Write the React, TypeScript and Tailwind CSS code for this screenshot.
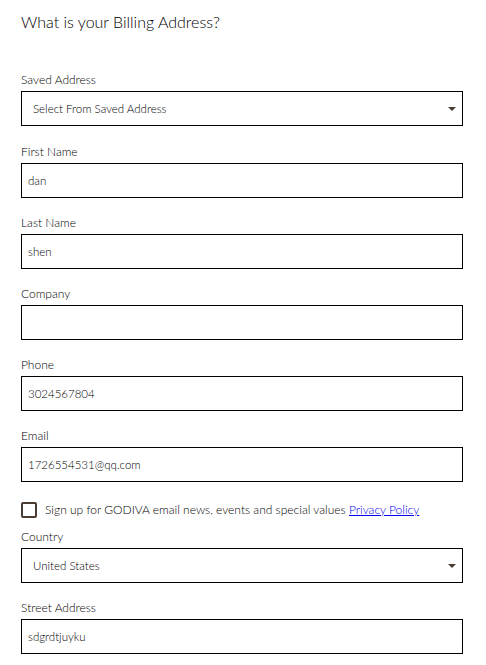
const FIELDS_TOP = [
  { label: 'First Name', value: 'dan' },
  { label: 'Last Name', value: 'shen' },
  { label: 'Company', value: '' },
  { label: 'Phone', value: '3024567804' },
  { label: 'Email', value: '1726554531@qq.com' },
];

function Caret() {
  return (
    <svg width="8" height="4" viewBox="0 0 8 4" className="absolute right-[6px] top-[15px]">
      <path d="M0 0h8L4 4z" fill="#4a3b33" />
    </svg>
  );
}

function SelectBox({ value }: { value: string }) {
  return (
    <div className="relative h-[35px] border border-black bg-white flex items-center pl-[11px] text-[11.5px] text-black">
      {value}
      <Caret />
    </div>
  );
}

function Field({ label, value }: { label: string; value: string }) {
  return (
    <div className="mb-[16px]">
      <label className="block h-[17px] text-[12px] leading-[17px] text-black mb-[3px]">{label}</label>
      <input
        readOnly
        value={value}
        className="block w-full h-[35px] border border-black bg-white px-[6px] text-[11.5px] text-black font-light outline-none"
      />
    </div>
  );
}

export default function App() {
  return (
    <main
      className="min-h-screen bg-white text-black font-light"
      style={{ fontFamily: 'Lato, "Liberation Sans", sans-serif' }}
    >
      <div className="w-[442px] ml-[21px] pt-[11px]">
        <h1 className="text-[16px] leading-[22px] font-light mb-[38px]">What is your Billing Address?</h1>

        <div className="mb-[17px]">
          <label className="block h-[17px] text-[12px] leading-[17px] mb-[3px]">Saved Address</label>
          <SelectBox value="Select From Saved Address" />
        </div>

        {FIELDS_TOP.map((f) => (
          <Field key={f.label} label={f.label} value={f.value} />
        ))}

        <div className="flex items-center gap-[8px] mt-[19px] mb-[9px] h-[18px] text-[12px]">
          <span className="w-[16px] h-[16px] border-2 border-[#4a3b33] rounded-[2px] shrink-0" />
          <span>
            Sign up for GODIVA email news, events and special values{' '}
            <a href="#" className="text-[#0000ee] underline">Privacy Policy</a>
          </span>
        </div>

        <div className="mb-[16px]">
          <label className="block h-[17px] text-[12px] leading-[17px] mb-[3px]">Country</label>
          <SelectBox value="United States" />
        </div>

        <Field label="Street Address" value="sdgrdtjuyku" />
      </div>
    </main>
  );
}
